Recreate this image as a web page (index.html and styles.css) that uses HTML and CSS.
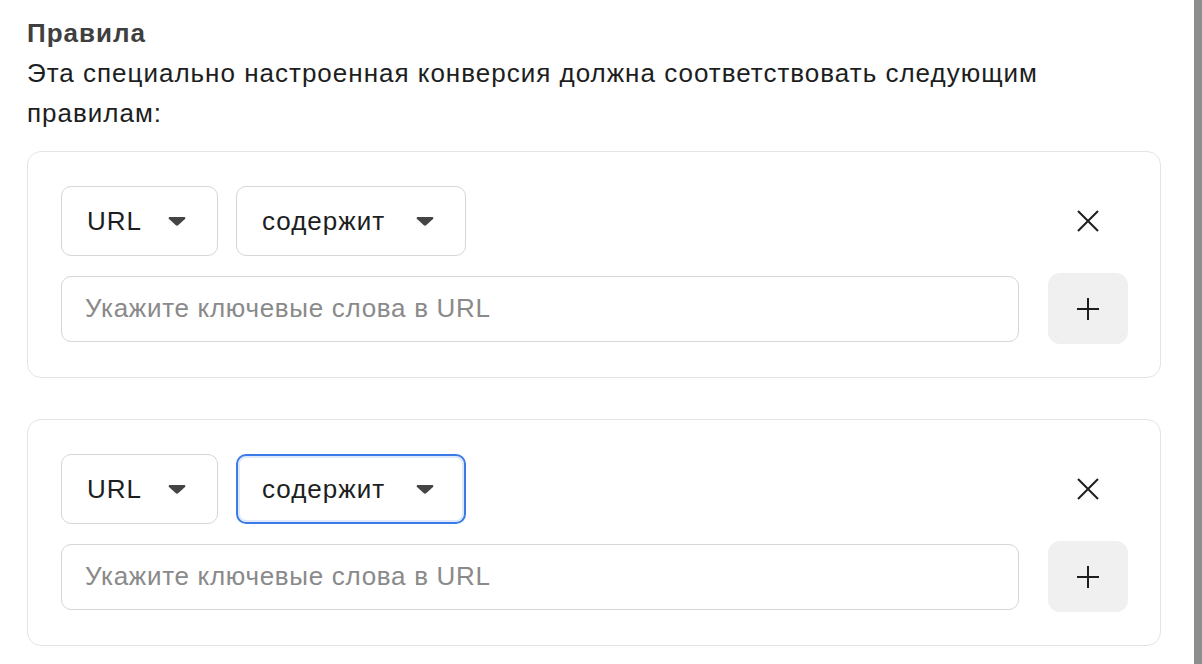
FILE: index.html
```html
<!DOCTYPE html>
<html>
<head>
  <meta charset="UTF-8">
  <title>Правила</title>
  <link rel="stylesheet" href="styles.css">
</head>
<body>
  <div class="page">
    <div class="main">
      <div class="rules-title">Правила</div>
      <p class="rules-desc">Эта специально настроенная конверсия должна соответствовать следующим правилам:</p>

      <div class="rule-card">
        <div class="rule-row">
          <div class="select">
            <span class="select-value">URL</span>
            <svg class="caret" width="18" height="10" viewBox="0 0 18 10"><path d="M2 1h14c1.2 0 1.8 1.2 1 2l-6.6 6a2 2 0 0 1-2.8 0L1 3C.2 2.2.8 1 2 1z" fill="#444"/></svg>
          </div>
          <div class="select select-operator">
            <span class="select-value">содержит</span>
            <svg class="caret" width="18" height="10" viewBox="0 0 18 10"><path d="M2 1h14c1.2 0 1.8 1.2 1 2l-6.6 6a2 2 0 0 1-2.8 0L1 3C.2 2.2.8 1 2 1z" fill="#444"/></svg>
          </div>
          <button class="icon-btn remove-btn">
            <svg width="24" height="24" viewBox="0 0 24 24"><path d="M2 2l20 20M22 2L2 22" stroke="#1c1e21" stroke-width="2"/></svg>
          </button>
        </div>
        <div class="rule-row">
          <input class="keyword-input" type="text" placeholder="Укажите ключевые слова в URL">
          <button class="icon-btn add-btn">
            <svg width="24" height="24" viewBox="0 0 24 24"><path d="M12 1v22M1 12h22" stroke="#1c1e21" stroke-width="2"/></svg>
          </button>
        </div>
      </div>

      <div class="rule-card">
        <div class="rule-row">
          <div class="select">
            <span class="select-value">URL</span>
            <svg class="caret" width="18" height="10" viewBox="0 0 18 10"><path d="M2 1h14c1.2 0 1.8 1.2 1 2l-6.6 6a2 2 0 0 1-2.8 0L1 3C.2 2.2.8 1 2 1z" fill="#444"/></svg>
          </div>
          <div class="select select-operator focused">
            <span class="select-value">содержит</span>
            <svg class="caret" width="18" height="10" viewBox="0 0 18 10"><path d="M2 1h14c1.2 0 1.8 1.2 1 2l-6.6 6a2 2 0 0 1-2.8 0L1 3C.2 2.2.8 1 2 1z" fill="#444"/></svg>
          </div>
          <button class="icon-btn remove-btn">
            <svg width="24" height="24" viewBox="0 0 24 24"><path d="M2 2l20 20M22 2L2 22" stroke="#1c1e21" stroke-width="2"/></svg>
          </button>
        </div>
        <div class="rule-row">
          <input class="keyword-input" type="text" placeholder="Укажите ключевые слова в URL">
          <button class="icon-btn add-btn">
            <svg width="24" height="24" viewBox="0 0 24 24"><path d="M12 1v22M1 12h22" stroke="#1c1e21" stroke-width="2"/></svg>
          </button>
        </div>
      </div>
    </div>
    <div class="edge"></div>
  </div>
</body>
</html>
```

FILE: styles.css
```css
* {
  box-sizing: border-box;
}

body {
  margin: 0;
  font-family: "Liberation Sans", Arial, sans-serif;
  letter-spacing: 1px;
  background: white;
  color: #1c1e21;
}

.page {
  display: flex;
  height: 664px;
  overflow: hidden;
}

.main {
  flex: 1;
  padding: 13px 33px 0 27px;
}

.edge {
  width: 8px;
  background: #8e8e8e;
}

.rules-title {
  font-size: 26px;
  line-height: 40px;
  font-weight: 700;
  color: #3f3f3f;
}

.rules-desc {
  margin: 0 0 18px;
  font-size: 26px;
  line-height: 40px;
}

.rule-card {
  border: 1px solid #e2e4e7;
  border-radius: 14px;
  padding: 33px 32px 33px 33px;
  margin-bottom: 41px;
}

.rule-row {
  display: flex;
  align-items: center;
  gap: 18px;
}

.rule-row + .rule-row {
  margin-top: 17px;
}

.select {
  display: flex;
  align-items: center;
  justify-content: space-between;
  gap: 26px;
  height: 70px;
  padding: 0 31px 0 25px;
  border: 1px solid #d6d6d6;
  border-radius: 10px;
  font-size: 26px;
  background: white;
}

.select-operator {
  min-width: 230px;
}

.select-value {
  line-height: 1;
}

.select.focused {
  border: 2px solid #3a7be6;
  box-shadow: inset 0 0 0 2px #dfe9f9;
  padding: 0 30px 0 24px;
}

.caret {
  display: block;
}

.icon-btn {
  display: flex;
  align-items: center;
  justify-content: center;
  width: 80px;
  height: 71px;
  border: none;
  border-radius: 12px;
  background: none;
  padding: 0;
  cursor: pointer;
}

.remove-btn {
  margin-left: auto;
}

.add-btn {
  background: #f0f0f0;
  margin-left: 11px;
}

.keyword-input {
  flex: 1;
  height: 66px;
  padding: 0 23px;
  border: 1px solid #d6d6d6;
  border-radius: 10px;
  font-family: inherit;
  font-size: 26px;
  letter-spacing: 0.7px;
  color: #1c1e21;
  outline: none;
}

.keyword-input::placeholder {
  color: #8a8a8a;
}
```
